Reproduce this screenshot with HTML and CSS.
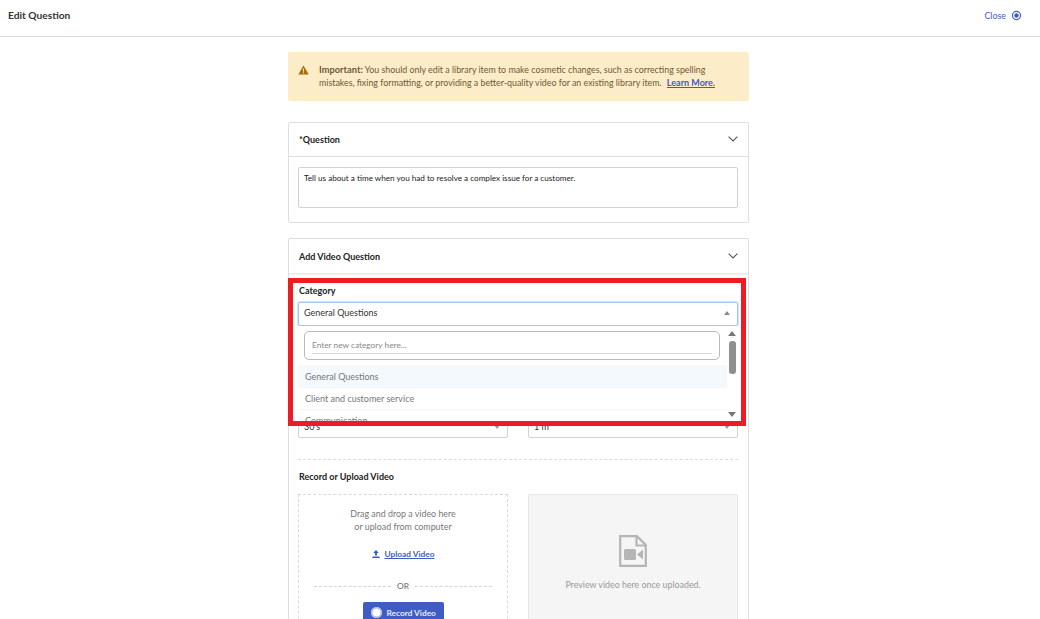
FILE: index.html
```html
<!DOCTYPE html>
<html lang="en">
<head>
<meta charset="utf-8">
<title>Edit Question</title>
<link rel="stylesheet" href="styles.css">
</head>
<body>
<header class="topbar">
  <div class="topbar-title">Edit Question</div>
  <a class="close-link">Close
    <svg class="close-icon" viewBox="0 0 12 12"><circle cx="6" cy="6" r="4.4" fill="none" stroke="#3f5bc4" stroke-width="1.3"/><circle cx="6" cy="6" r="2.4" fill="#3f5bc4"/></svg>
  </a>
</header>
<main class="column">
  <div class="alert">
    <svg class="alert-icon" viewBox="0 0 12 11"><path d="M6 .5 11.7 10.5H.3Z" fill="#a86a08"/><rect x="5.4" y="3.8" width="1.2" height="3.6" fill="#fdecc8"/><rect x="5.4" y="8" width="1.2" height="1.2" fill="#fdecc8"/></svg>
    <p class="alert-text"><b>Important:</b> You should only edit a library item to make cosmetic changes, such as correcting spelling mistakes, fixing formatting, or providing a better-quality video for an existing library item. <a class="link">Learn More.</a></p>
  </div>

  <section class="card question-card">
    <div class="card-head">
      <span class="card-title">*Question</span>
      <svg class="chevron" viewBox="0 0 10 6"><path d="M.6.6 5 5 9.4.6" fill="none" stroke="#555" stroke-width="1.1"/></svg>
    </div>
    <div class="question-body">
      <div class="textarea">Tell us about a time when you had to resolve a complex issue for a customer.</div>
    </div>
  </section>

  <section class="card video-card">
    <div class="card-head video-head">
      <span class="card-title">Add Video Question</span>
      <svg class="chevron" viewBox="0 0 10 6"><path d="M.6.6 5 5 9.4.6" fill="none" stroke="#555" stroke-width="1.1"/></svg>
    </div>
    <div class="video-body">
      <div class="field-label">Category</div>
      <div class="select-wrap">
        <div class="select select-open">General Questions <span class="caret-up"></span></div>
        <div class="dropdown">
          <div class="dropdown-list">
            <div class="search-box"><div class="search-input">Enter new category here...</div></div>
            <div class="option option-active">General Questions</div>
            <div class="option">Client and customer service</div>
            <div class="option">Communication</div>
          </div>
          <div class="scrollbar">
            <span class="arrow-up"></span>
            <span class="thumb"></span>
            <span class="arrow-down"></span>
          </div>
        </div>
      </div>

      <div class="two-col limits">
        <div class="select select-small">30's <span class="caret-down"></span></div>
        <div class="select select-small">1 m <span class="caret-down"></span></div>
      </div>

      <div class="dash-rule"></div>
      <div class="field-label upload-title">Record or Upload Video</div>

      <div class="two-col">
        <div class="upload-box">
          <p class="upload-copy">Drag and drop a video here<br>or upload from computer</p>
          <a class="upload-link">
            <svg class="upload-icon" viewBox="0 0 8 8"><path d="M4 0 6.8 3H5v2.4H3V3H1.2ZM.4 6.4h7.2V8H.4Z" fill="#3f5bc4"/></svg>
            <span class="link">Upload Video</span>
          </a>
          <div class="or-row"><span class="or-line"></span><span>OR</span><span class="or-line"></span></div>
          <button class="record-btn"><span class="record-dot"></span>Record Video</button>
        </div>
        <div class="preview-box">
          <svg class="file-icon" viewBox="0 0 28 32"><path d="M1.2 1.2H18L26.8 10V30.8H1.2Z" fill="none" stroke="#b5b5b5" stroke-width="2.2"/><path d="M17.5 1.5V10.5H26.5" fill="none" stroke="#b5b5b5" stroke-width="2.2"/><rect x="5" y="14" width="12" height="11" rx="1.5" fill="#b5b5b5"/><path d="M18 19.5 24 14.5V24.5Z" fill="#b5b5b5"/></svg>
          <p class="preview-copy">Preview video here once uploaded.</p>
        </div>
      </div>
    </div>
  </section>
</main>
<div class="highlight"></div>
</body>
</html>
```
FILE: styles.css
```css
* { box-sizing: border-box; }
html, body { margin: 0; height: 619px; overflow: hidden; background: #fff; }
body { font-family: Lato, "Liberation Sans", sans-serif; font-size: 9.5px; color: #222; position: relative; }

.topbar { height: 37px; border-bottom: 1px solid #dcdcdc; display: flex; justify-content: space-between; padding: 9px 18px 0 8px; }
.topbar-title { font-size: 10.2px; font-weight: 700; color: #333; line-height: 12px; }
.close-link { display: flex; align-items: center; gap: 5px; height: 13px; color: #3f5bc4; font-size: 8.9px; }
.close-icon { width: 11px; height: 11px; }

.column { width: 461px; margin: 15px 0 0 288px; }
.alert { height: 49px; background: #fdecc8; border-radius: 2px; display: flex; padding: 11px 8px 0 10px; }
.alert-icon { width: 11px; height: 10px; flex: none; margin: 2px 10px 0 0; }
.alert-text { margin: 0; font-size: 8.85px; line-height: 13px; color: #6e5a33; }
.alert-text b { font-size: 9.3px; font-weight: 700; }
.alert-text .link { font-size: 9px; margin-left: 3px; }
.link { color: #3f5bc4; text-decoration: underline; font-weight: 700; }

.card { border: 1px solid #dedede; border-radius: 2px; background: #fff; }
.question-card { margin-top: 21px; height: 101px; }
.video-card { margin-top: 15px; height: 420px; }
.card-head { height: 34px; border-bottom: 1px solid #dedede; display: flex; align-items: center; justify-content: space-between; padding: 0 10px 1px 10px; }
.video-head { height: 36px; padding-bottom: 0; border-bottom-width: 2px; border-bottom-color: #ececec; }
.card-title { font-size: 9px; font-weight: 700; color: #222; }
.chevron { width: 10px; height: 6px; }

.question-body { padding: 10px 10px 0 9px; }
.textarea { height: 41px; border: 1px solid #d2d2d2; border-radius: 2px; padding: 5px; font-size: 8.15px; line-height: 11px; color: #222; }

.video-body { padding: 10px 10px 0 9px; }
.field-label { font-size: 9px; font-weight: 700; color: #222; line-height: 12px; padding-left: 1px; }
.select-wrap { position: relative; margin-top: 5px; }
.select { display: flex; justify-content: space-between; align-items: center; border: 1px solid #d2d2d2; border-radius: 2px; padding: 0 6px 0 5px; font-size: 9px; color: #333; }
.select-open { height: 24px; padding-bottom: 3px; border-color: #9fc7f0; box-shadow: 0 0 0 1px #d3e5f8; color: #333; }
.caret-up, .caret-down { width: 0; height: 0; border-left: 3.5px solid transparent; border-right: 3.5px solid transparent; margin-right: 1px; }
.caret-up { border-bottom: 4px solid #8a8a8a; }
.caret-down { border-top: 4px solid #8a8a8a; }

.dropdown { position: absolute; left: 0; right: 0; top: 24px; height: 96px; background: #fff; display: flex; overflow: hidden; z-index: 2; }
.dropdown-list { width: 429px; flex: none; }
.search-box { margin: 5px 7px 5px 6px; height: 29px; border: 1px solid #b9b9b9; border-radius: 5px; padding: 7px 7px 0; }
.search-input { height: 15px; border-bottom: 1px solid #d4d4d4; font-size: 8.3px; line-height: 12px; color: #888; }
.option { height: 22px; padding: 0 7px; display: flex; align-items: center; font-size: 9px; color: #777; border-bottom: 1px solid #f5f5f5; }
.option-active { height: 23px; background: #f4f9fd; }
.scrollbar { flex: 1; display: flex; flex-direction: column; align-items: center; padding-right: 1px; position: relative; }
.arrow-up { margin-top: 5px; width: 0; height: 0; border-left: 4px solid transparent; border-right: 4px solid transparent; border-bottom: 5px solid #777; }
.thumb { margin-top: 5px; width: 7px; height: 33px; border-radius: 3px; background: #8f8f8f; }
.arrow-down { position: absolute; top: 86px; width: 0; height: 0; border-left: 4px solid transparent; border-right: 4px solid transparent; border-top: 5px solid #777; }

.two-col { display: grid; grid-template-columns: 210px 210px; gap: 20px; }
.limits { margin-top: 89px; }
.select-small { height: 23px; }
.select-small .caret-down { border-top-color: #999; }

.dash-rule { margin-top: 21px; border-top: 1px dashed #dcdcdc; }
.upload-title { margin-top: 11px; margin-bottom: 11px; }

.upload-box { height: 150px; border: 1px dashed #d8d8d8; display: flex; flex-direction: column; align-items: center; padding-top: 12px; }
.upload-copy { margin: 0; text-align: center; font-size: 8.9px; line-height: 13px; color: #777; }
.upload-link { display: flex; align-items: center; gap: 5px; margin-top: 15px; font-size: 8.3px; line-height: 12px; }
.upload-icon { width: 8px; height: 8px; }
.or-row { display: flex; align-items: center; gap: 6px; margin-top: 20px; width: 178px; font-size: 8.4px; color: #666; line-height: 12px; }
.or-line { flex: 1; border-top: 1px dashed #d4d4d4; }
.record-btn { display: flex; align-items: center; gap: 5px; margin-top: 10px; width: 81px; height: 27px; align-self: center; padding: 0 0 6px 8px; border: 0; border-radius: 2px; background: #3f5bc4; color: #e8ecfa; font: 700 8.3px Lato, "Liberation Sans", sans-serif; }
.record-dot { width: 11px; height: 11px; border-radius: 50%; background: #fff; box-shadow: inset 0 0 0 1.5px #a9b6ea; }

.preview-box { height: 150px; background: #f5f5f5; border: 1px solid #e6e6e6; border-radius: 2px; display: flex; flex-direction: column; align-items: center; padding-top: 40px; }
.file-icon { width: 28px; height: 32px; }
.preview-copy { margin: 12px 0 0; font-size: 8.85px; line-height: 12px; color: #999; }

.highlight { position: absolute; left: 288px; top: 278px; width: 458px; height: 148px; border: 5px solid #ed1c24; z-index: 5; pointer-events: none; }
```
